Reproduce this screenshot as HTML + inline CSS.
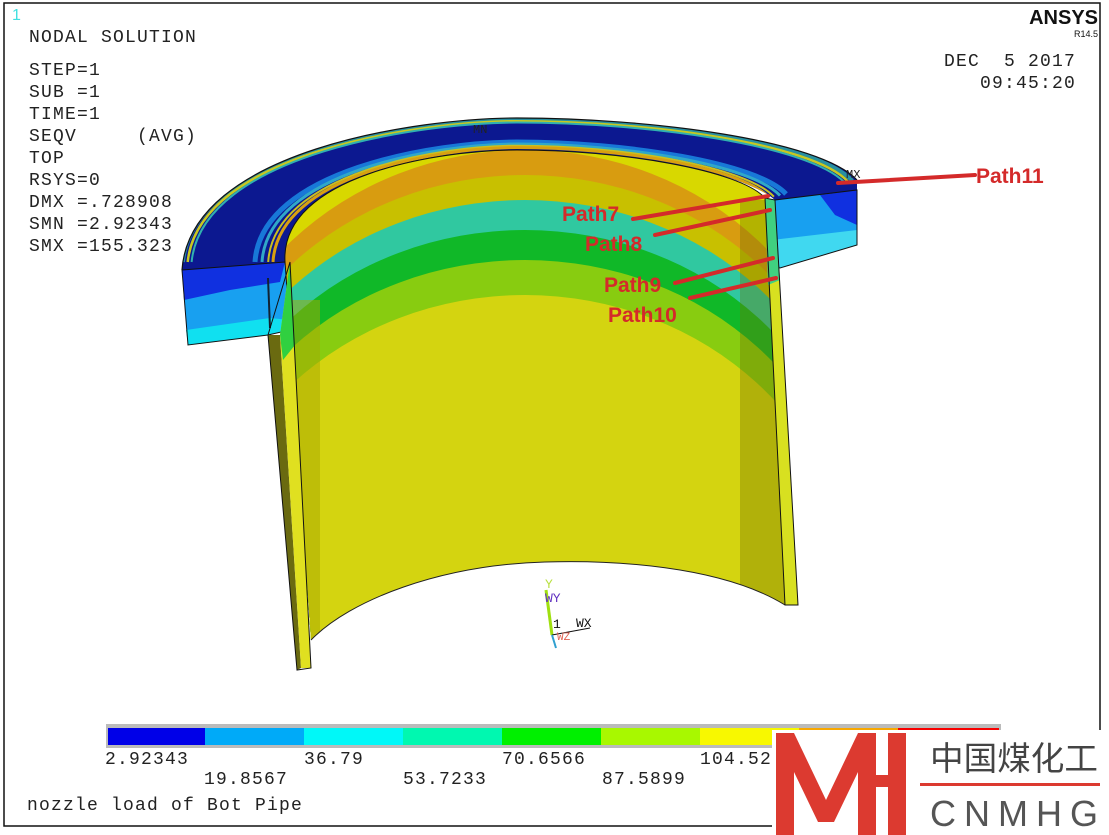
<!DOCTYPE html>
<html><head><meta charset="utf-8"><style>
html,body{margin:0;padding:0;background:#fff;width:1109px;height:835px;overflow:hidden}
svg{display:block}
.m{font-family:"Liberation Mono",monospace;font-size:18px;fill:#222;letter-spacing:1.2px}
.p{font-family:"Liberation Sans",sans-serif;font-weight:bold;font-size:21px;fill:#d42a2a}
</style></head><body>
<svg width="1109" height="835" viewBox="0 0 1109 835" xmlns="http://www.w3.org/2000/svg">
<defs>
<clipPath id="top"><path d="M182,270 C190,150 420,118 517,118 C650,118 820,140 857,180 L857,190 L775,200 C740,170 620,150 517,150 C440,150 280,175 285,262 Z"/></clipPath>
<clipPath id="inn"><path d="M285,262 C280,175 440,150 517,150 C620,150 740,170 765,198 L785,605 C720,565 610,560 545,562 C440,565 350,600 311,640 Z"/></clipPath>
</defs>
<rect x="4" y="3" width="1096" height="823" fill="none" stroke="#111" stroke-width="1.5"/>
<!-- inner surface -->
<g clip-path="url(#inn)">
<rect x="270" y="140" width="520" height="520" fill="#d8d800"/>
<ellipse cx="525" cy="460" rx="330" ry="310" fill="#d89c10"/>
<ellipse cx="525" cy="480" rx="330" ry="305" fill="#c8c000"/>
<ellipse cx="525" cy="500" rx="330" ry="300" fill="#30c8a0"/>
<ellipse cx="525" cy="530" rx="330" ry="300" fill="#10b828"/>
<ellipse cx="525" cy="560" rx="330" ry="300" fill="#88cc10"/>
<ellipse cx="525" cy="600" rx="330" ry="305" fill="#d4d410"/>
<rect x="270" y="300" width="50" height="360" fill="#a8a800" opacity=".5"/>
<rect x="740" y="200" width="50" height="410" fill="#707000" opacity=".35"/>
</g>
<path d="M311,640 C350,600 440,565 545,562 C610,560 720,565 785,605" fill="none" stroke="#222" stroke-width="1"/>
<!-- top surface -->
<g clip-path="url(#top)">
<rect x="170" y="110" width="700" height="170" fill="#0c1890"/>
<g fill="none">
<path d="M182.9,262 C194.5,151.25 421,119.6 517,119.6 C648.5,119.6 816,141.5 852.4,180.9" stroke="#2890a0" stroke-width="4"/>
<path d="M187.7,262 C199,152.5 422,121.2 517,121.2 C647,121.2 812,143 848.2,181.8" stroke="#c8c820" stroke-width="2.5"/>
<path d="M191.6,262 C202.5,153.5 423,122.5 517,122.5 C645.5,122.5 808,144.5 844.8,182.7" stroke="#30b0b0" stroke-width="2"/>
<path d="M255,262 C261,170 436,142 517,142 C626,142 757,163 786,194" stroke="#1878d8" stroke-width="5"/>
<path d="M262,262 C268,171.5 437.5,144 517,144 C624,144 751,164.5 780,195.5" stroke="#30a8c8" stroke-width="3"/>
<path d="M268.2,262 C273.6,173.25 438.6,145.7 517,145.7 C622.1,145.7 745.6,166.3 773.9,196.7" stroke="#c8c020" stroke-width="2"/>
<path d="M273,262 C278,174.5 439.6,147.5 517,147.5 C620.6,147.5 742,168 769,197.5" stroke="#d8a010" stroke-width="3"/>
</g>
</g>
<path d="M182,270 C190,150 420,118 517,118 C650,118 820,140 857,180" fill="none" stroke="#111" stroke-width="1.2"/>
<path d="M285,262 C280,175 440,150 517,150 C620,150 740,170 765,198" fill="none" stroke="#111" stroke-width="1"/>
<!-- left cut face -->
<path d="M182,270 L285,262 L290,330 L268,335 L188,345 Z" fill="#18a0f0"/>
<path d="M182,270 L285,262 L280,282 L230,290 L184,300 Z" fill="#1030e0"/>
<path d="M186,330 L270,318 L290,320 L290,330 L268,335 L188,345 Z" fill="#10e0f0"/>
<path d="M182,270 L285,262 L290,330 L268,335 L188,345 Z" fill="none" stroke="#111"/>
<line x1="268" y1="278" x2="270" y2="328" stroke="#123" stroke-width="2"/>
<!-- left wall -->
<path d="M268,335 L280,335 L301,668 L297,670 Z" fill="#6a6a10"/>
<path d="M280,335 L290,262 L311,668 L301,668 Z" fill="#e0e020"/>
<path d="M280,335 L290,262 L295,345 L283,360 Z" fill="#30d040"/>
<path d="M268,335 L290,262 L311,668 L297,670 Z" fill="none" stroke="#111"/>
<!-- right cut face -->
<path d="M775,200 L857,190 L857,245 L780,268 L772,265 Z" fill="#18a0f0"/>
<path d="M820,195 L857,190 L857,225 L835,215 Z" fill="#1030e0"/>
<path d="M772,240 L857,230 L857,245 L780,268 Z" fill="#40d8f0"/>
<path d="M775,200 L857,190 L857,245 L780,268 L772,265 Z" fill="none" stroke="#111"/>
<!-- right wall -->
<path d="M765,198 L775,200 L798,605 L785,605 Z" fill="#d8e020"/>
<path d="M765,198 L775,200 L780,280 L768,285 Z" fill="#40d080"/>
<path d="M765,198 L775,200 L798,605 L785,605 Z" fill="none" stroke="#111"/>
<text x="473" y="133" class="m" style="font-size:12px;letter-spacing:0">MN</text>
<text x="846" y="178" class="m" style="font-size:12px;letter-spacing:0">MX</text>
<!-- path lines -->
<g stroke="#d42a2a" stroke-width="4" stroke-linecap="round">
<line x1="838" y1="183" x2="975" y2="175"/>
<line x1="633" y1="219" x2="768" y2="196"/>
<line x1="655" y1="235" x2="770" y2="210"/>
<line x1="675" y1="283" x2="773" y2="258"/>
<line x1="690" y1="298" x2="776" y2="278"/>
</g>
<text x="976" y="183" class="p">Path11</text>
<text x="562" y="221" class="p">Path7</text>
<text x="585" y="251" class="p">Path8</text>
<text x="604" y="292" class="p">Path9</text>
<text x="608" y="322" class="p">Path10</text>
<!-- triad -->
<g font-family="Liberation Mono,monospace" font-size="13">
<line x1="546" y1="590" x2="552" y2="635" stroke="#a0e010" stroke-width="3"/>
<line x1="552" y1="635" x2="590" y2="628" stroke="#111"/>
<line x1="552" y1="635" x2="556" y2="648" stroke="#30a0d0" stroke-width="2"/>
<text x="545" y="588" fill="#b8e040">Y</text>
<text x="545" y="602" fill="#6030c0">WY</text>
<text x="576" y="627" fill="#111">WX</text>
<text x="553" y="628" fill="#111">1</text>
<text x="557" y="640" fill="#e06050" font-size="11">WZ</text>
</g>
<!-- text -->
<text x="12" y="20" style="font-family:Liberation Sans,sans-serif;font-size:16px;fill:#40e0e0">1</text>
<text x="29" y="42" class="m">NODAL SOLUTION</text>
<text x="29" y="75" class="m">STEP=1</text>
<text x="29" y="97" class="m">SUB =1</text>
<text x="29" y="119" class="m">TIME=1</text>
<text x="29" y="141" class="m" xml:space="preserve">SEQV     (AVG)</text>
<text x="29" y="163" class="m">TOP</text>
<text x="29" y="185" class="m">RSYS=0</text>
<text x="29" y="207" class="m">DMX =.728908</text>
<text x="29" y="229" class="m">SMN =2.92343</text>
<text x="29" y="251" class="m">SMX =155.323</text>
<text x="944" y="66" class="m" xml:space="preserve">DEC  5 2017</text>
<text x="980" y="88" class="m">09:45:20</text>
<text x="1098" y="24" text-anchor="end" style="font-family:Liberation Sans,sans-serif;font-weight:bold;font-size:20px;fill:#111">ANSYS</text>
<text x="1098" y="37" text-anchor="end" style="font-family:Liberation Sans,sans-serif;font-size:9px;fill:#111">R14.5</text>
<!-- legend -->
<rect x="106" y="724" width="895" height="24" fill="#bbb"/>
<rect x="108" y="728" width="97" height="17" fill="#0000e8"/>
<rect x="205" y="728" width="99" height="17" fill="#00aaf8"/>
<rect x="304" y="728" width="99" height="17" fill="#00f8f8"/>
<rect x="403" y="728" width="99" height="17" fill="#00f8b0"/>
<rect x="502" y="728" width="99" height="17" fill="#00f000"/>
<rect x="601" y="728" width="99" height="17" fill="#a8f800"/>
<rect x="700" y="728" width="99" height="17" fill="#f8f800"/>
<rect x="799" y="728" width="99" height="17" fill="#f8a800"/>
<rect x="898" y="728" width="101" height="17" fill="#f80000"/>
<text x="105" y="764" class="m">2.92343</text>
<text x="304" y="764" class="m">36.79</text>
<text x="502" y="764" class="m">70.6566</text>
<text x="700" y="764" class="m">104.52</text>
<text x="204" y="784" class="m">19.8567</text>
<text x="403" y="784" class="m">53.7233</text>
<text x="602" y="784" class="m">87.5899</text>
<text x="27" y="810" class="m">nozzle load of Bot Pipe</text>
<!-- logo -->
<rect x="772" y="730" width="337" height="105" fill="#fff"/>
<g fill="#dc3a30">
<path d="M776,733 L794,733 L826,800 L858,733 L876,733 L876,835 L858,835 L858,772 L834,822 L818,822 L794,772 L794,835 L776,835 Z"/>
<rect x="888" y="733" width="18" height="102"/>
<rect x="876" y="775" width="20" height="12"/>
<rect x="920" y="783" width="180" height="3"/>
</g>
<text x="930" y="770" textLength="168" lengthAdjust="spacingAndGlyphs" style="font-family:'Noto Sans CJK SC',sans-serif;font-size:33px;fill:#444">中国煤化工</text>
<text x="930" y="826" textLength="168" lengthAdjust="spacing" style="font-family:'Liberation Sans',sans-serif;font-size:36px;fill:#555">CNMHG</text>
</svg>
</body></html>
